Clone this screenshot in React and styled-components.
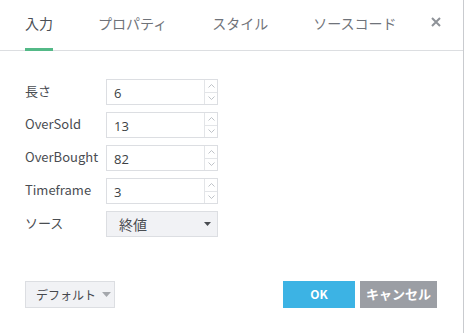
import React from "react";
import styled, { createGlobalStyle } from "styled-components";

const Global = createGlobalStyle`
  html, body { margin: 0; padding: 0; background: #fff; }
  body { font-family: "Open Sans", "Noto Sans CJK JP", sans-serif; }
  * { box-sizing: border-box; }
  svg { display: block; }
`;

const Dialog = styled.div`
  width: 464px;
  height: 333px;
  border-right: 1px solid #c9cbcf;
  display: flex;
  flex-direction: column;
  background: #fff;
`;

const Header = styled.div`
  height: 51px;
  border-bottom: 1px solid #dcdee1;
  display: flex;
  align-items: stretch;
  padding-left: 25px;
  position: relative;
`;

const Tab = styled.div`
  font-family: "Noto Sans CJK JP", sans-serif;
  font-size: 14px;
  color: ${(p) => (p.$active ? "#4b4f56" : "#6f737a")};
  margin-right: 45px;
  display: flex;
  align-items: center;
  padding-bottom: 4px;
  position: relative;
  &::after {
    content: "";
    display: ${(p) => (p.$active ? "block" : "none")};
    position: absolute;
    left: 0;
    right: 0;
    bottom: -1px;
    height: 3px;
    background: #53b987;
  }
`;

const Close = styled.div`
  position: absolute;
  right: 21px;
  top: 16px;
  width: 12px;
  height: 12px;
`;

const Form = styled.div`
  padding: 28px 0 0 25px;
  display: flex;
  flex-direction: column;
  gap: 7px;
`;

const Row = styled.div`
  display: flex;
  align-items: center;
  height: 26px;
`;

const Label = styled.div`
  width: 81px;
  font-family: "Noto Sans CJK JP", sans-serif;
  font-size: 13px;
  color: #4a4d52;
  padding-bottom: 4px;
`;

const InputBox = styled.div`
  width: 112px;
  height: 26px;
  border: 1px solid #dcdee2;
  display: flex;
  background: #fff;
`;

const Value = styled.div`
  flex: 1;
  font-family: "Open Sans", "Noto Sans CJK JP", sans-serif;
  font-size: 13px;
  color: #3c3f44;
  padding-left: 7px;
  display: flex;
  align-items: center;
  padding-top: 1px;
`;

const Spinner = styled.div`
  width: 13px;
  border-left: 1px solid #e3e5e8;
  display: flex;
  flex-direction: column;
`;

const SpinHalf = styled.div`
  flex: 1;
  display: flex;
  align-items: center;
  justify-content: center;
  & + & { border-top: 1px solid #e3e5e8; }
`;

const Select = styled.div`
  width: 112px;
  height: 26px;
  border: 1px solid #dcdee2;
  background: #f1f2f5;
  display: flex;
  align-items: center;
  justify-content: space-between;
  padding: 0 6px 0 12px;
  font-family: "Noto Sans CJK JP", sans-serif;
  font-size: 14px;
  color: #4a4d52;
`;

const Footer = styled.div`
  margin-top: auto;
  padding: 0 26px 25px 25px;
  display: flex;
  align-items: center;
`;

const DefaultBtn = styled.div`
  width: 90px;
  height: 27px;
  border: 1px solid #dcdee2;
  background: #f1f2f5;
  display: flex;
  align-items: center;
  padding-left: 10px;
  gap: 6px;
  font-family: "Noto Sans CJK JP", sans-serif;
  font-size: 12px;
  color: #45484d;
`;

const Spacer = styled.div`
  flex: 1;
`;

const Btn = styled.div`
  width: ${(p) => p.$w}px;
  height: 27px;
  margin-left: ${(p) => p.$ml || 0}px;
  background: ${(p) => p.$bg};
  color: #fff;
  font-family: "Noto Sans CJK JP", sans-serif;
  font-weight: 700;
  font-size: ${(p) => p.$fs}px;
  display: flex;
  align-items: center;
  justify-content: center;
  padding-bottom: 2px;
`;

const Up = () => (
  <svg width="7" height="4" viewBox="0 0 7 4">
    <path d="M0.5 3.5 L3.5 0.5 L6.5 3.5" fill="none" stroke="#b8bcc2" strokeWidth="0.9" />
  </svg>
);
const Down = () => (
  <svg width="7" height="4" viewBox="0 0 7 4">
    <path d="M0.5 0.5 L3.5 3.5 L6.5 0.5" fill="none" stroke="#b8bcc2" strokeWidth="0.9" />
  </svg>
);
const Caret = ({ color, w = 7 }) => (
  <svg width={w} height={w / 2 + 0.5} viewBox="0 0 8 4.5">
    <path d="M0 0 L8 0 L4 4.5 Z" fill={color} />
  </svg>
);

const NumberField = ({ value }) => (
  <InputBox>
    <Value>{value}</Value>
    <Spinner>
      <SpinHalf><Up /></SpinHalf>
      <SpinHalf><Down /></SpinHalf>
    </Spinner>
  </InputBox>
);

const rows = [
  ["長さ", "6"],
  ["OverSold", "13"],
  ["OverBought", "82"],
  ["Timeframe", "3"],
];

export default function App() {
  return (
    <>
      <Global />
      <Dialog>
        <Header>
          <Tab $active>入力</Tab>
          <Tab>プロパティ</Tab>
          <Tab>スタイル</Tab>
          <Tab>ソースコード</Tab>
          <Close>
            <svg width="12" height="12" viewBox="0 0 12 12">
              <path d="M2 2 L10 10 M10 2 L2 10" stroke="#8e9298" strokeWidth="2" />
            </svg>
          </Close>
        </Header>
        <Form>
          {rows.map(([l, v]) => (
            <Row key={l}>
              <Label>{l}</Label>
              <NumberField value={v} />
            </Row>
          ))}
          <Row>
            <Label>ソース</Label>
            <Select>
              <span>終値</span>
              <Caret color="#4a4d52" />
            </Select>
          </Row>
        </Form>
        <Footer>
          <DefaultBtn>
            <span>デフォルト</span>
            <Caret color="#a4a7ac" w={9} />
          </DefaultBtn>
          <Spacer />
          <Btn $w={72} $bg="#3cb3e4" $fs={12}>OK</Btn>
          <Btn $w={77} $ml={5} $bg="#9b9ea4" $fs={13}>キャンセル</Btn>
        </Footer>
      </Dialog>
    </>
  );
}
